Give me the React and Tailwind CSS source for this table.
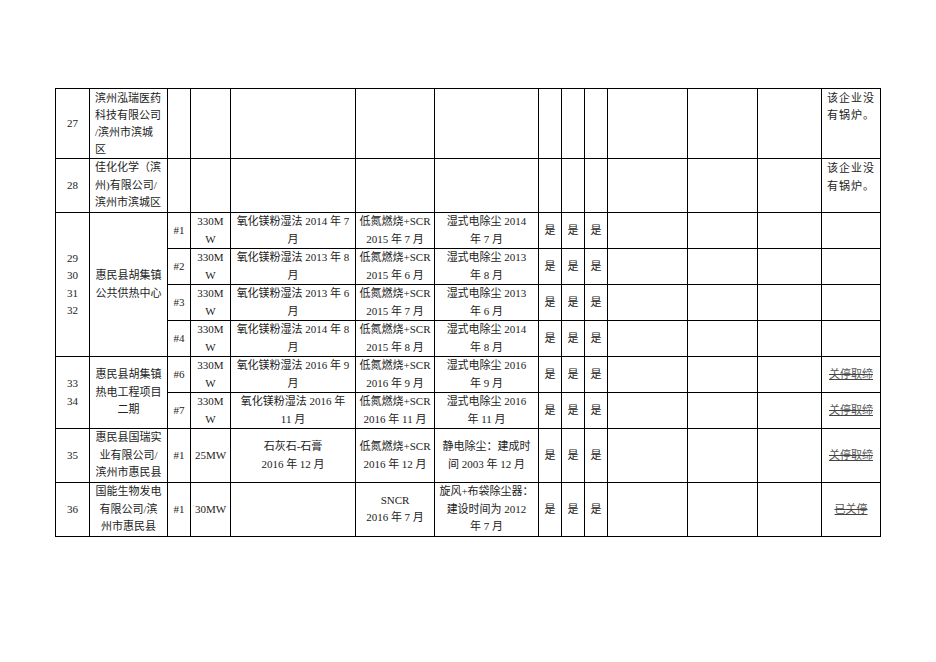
import React from 'react';

const widths = [34, 78, 23, 40, 125, 79, 104, 23, 23, 23, 80, 70, 64, 59];

const Td = ({ children, className = '', ...rest }) => (
    <td className={`border border-black p-0 align-middle text-center ${className}`} {...rest}>
        {children}
    </td>
);

const Empty = ({ n }) => (
    <>
        {Array.from({ length: n }).map((_, i) => (
            <Td key={i}></Td>
        ))}
    </>
);

const Yes = () => (
    <>
        <Td>是</Td>
        <Td>是</Td>
        <Td>是</Td>
    </>
);

const Struck = ({ children }) => (
    <span className="text-[#555] [text-decoration-line:underline_line-through] decoration-[#444]">{children}</span>
);

const units = [
    { no: '#1', fgd: ['氧化镁粉湿法 2014 年 7', '月'], scr: '2015 年 7 月', dust: '2014', dm: '年 7 月' },
    { no: '#2', fgd: ['氧化镁粉湿法 2013 年 8', '月'], scr: '2015 年 6 月', dust: '2013', dm: '年 8 月' },
    { no: '#3', fgd: ['氧化镁粉湿法 2013 年 6', '月'], scr: '2015 年 7 月', dust: '2013', dm: '年 6 月' },
    { no: '#4', fgd: ['氧化镁粉湿法 2014 年 8', '月'], scr: '2015 年 8 月', dust: '2014', dm: '年 8 月' },
];

const Lines = ({ items }) => (
    <>
        {items.map((t, i) => (
            <div key={i}>{t}</div>
        ))}
    </>
);

const UnitCells = ({ u }) => (
    <>
        <Td>{u.no}</Td>
        <Td><Lines items={['330M', 'W']} /></Td>
        <Td><Lines items={u.fgd} /></Td>
        <Td><Lines items={['低氮燃烧+SCR', u.scr]} /></Td>
        <Td><Lines items={['湿式电除尘 ' + u.dust, u.dm]} /></Td>
        <Yes />
    </>
);

const App = () => {
    return (
        <div className="min-h-screen bg-white pt-[88px] pl-[55px] text-[#222] text-[11px] leading-[17.5px] font-['Liberation_Serif','Noto_Sans_CJK_SC',serif]">
            <table className="table-fixed border-collapse w-[826px]">
                <colgroup>
                    {widths.map((w, i) => (
                        <col key={i} style={{ width: w }} />
                    ))}
                </colgroup>
                <tbody>
                    <tr className="h-[70px] leading-[17px]">
                        <Td>27</Td>
                        <Td className="text-left px-[5px]">
                            <Lines items={['滨州泓瑞医药', '科技有限公司', '/滨州市滨城', '区']} />
                        </Td>
                        <Empty n={11} />
                        <Td className="align-top text-left px-[5px] tracking-[1px] pt-px">
                            <Lines items={['该企业没', '有锅炉。']} />
                        </Td>
                    </tr>
                    <tr className="h-[54px]">
                        <Td>28</Td>
                        <Td className="text-left px-[5px]">
                            <Lines items={['佳化化学（滨', '州)有限公司/', '滨州市滨城区']} />
                        </Td>
                        <Empty n={11} />
                        <Td className="align-top text-left px-[5px] tracking-[1px] pt-px">
                            <Lines items={['该企业没', '有锅炉。']} />
                        </Td>
                    </tr>
                    {units.map((u, i) => (
                        <tr key={u.no} className="h-[36px]">
                            {i === 0 && (
                                <>
                                    <Td rowSpan={4}><Lines items={['29', '30', '31', '32']} /></Td>
                                    <Td rowSpan={4}><Lines items={['惠民县胡集镇', '公共供热中心']} /></Td>
                                </>
                            )}
                            <UnitCells u={u} />
                            <Empty n={4} />
                        </tr>
                    ))}
                    <tr className="h-[36px]">
                        <Td rowSpan={2}><Lines items={['33', '34']} /></Td>
                        <Td rowSpan={2}><Lines items={['惠民县胡集镇', '热电工程项目', '二期']} /></Td>
                        <UnitCells u={{ no: '#6', fgd: ['氧化镁粉湿法 2016 年 9', '月'], scr: '2016 年 9 月', dust: '2016', dm: '年 9 月' }} />
                        <Empty n={3} />
                        <Td><Struck>关停取缔</Struck></Td>
                    </tr>
                    <tr className="h-[36px]">
                        <UnitCells u={{ no: '#7', fgd: ['氧化镁粉湿法 2016 年', '11 月'], scr: '2016 年 11 月', dust: '2016', dm: '年 11 月' }} />
                        <Empty n={3} />
                        <Td><Struck>关停取缔</Struck></Td>
                    </tr>
                    <tr className="h-[54px]">
                        <Td>35</Td>
                        <Td><Lines items={['惠民县国瑞实', '业有限公司/', '滨州市惠民县']} /></Td>
                        <Td>#1</Td>
                        <Td>25MW</Td>
                        <Td><Lines items={['石灰石-石膏', '2016 年 12 月']} /></Td>
                        <Td><Lines items={['低氮燃烧+SCR', '2016 年 12 月']} /></Td>
                        <Td><Lines items={['静电除尘：建成时', '间 2003 年 12 月']} /></Td>
                        <Yes />
                        <Empty n={3} />
                        <Td><Struck>关停取缔</Struck></Td>
                    </tr>
                    <tr className="h-[53px]">
                        <Td>36</Td>
                        <Td><Lines items={['国能生物发电', '有限公司/滨', '州市惠民县']} /></Td>
                        <Td>#1</Td>
                        <Td>30MW</Td>
                        <Td></Td>
                        <Td><Lines items={['SNCR', '2016 年 7 月']} /></Td>
                        <Td><Lines items={['旋风+布袋除尘器：', '建设时间为 2012', '年 7 月']} /></Td>
                        <Yes />
                        <Empty n={3} />
                        <Td><Struck>已关停</Struck></Td>
                    </tr>
                </tbody>
            </table>
        </div>
    );
};

export default App;
